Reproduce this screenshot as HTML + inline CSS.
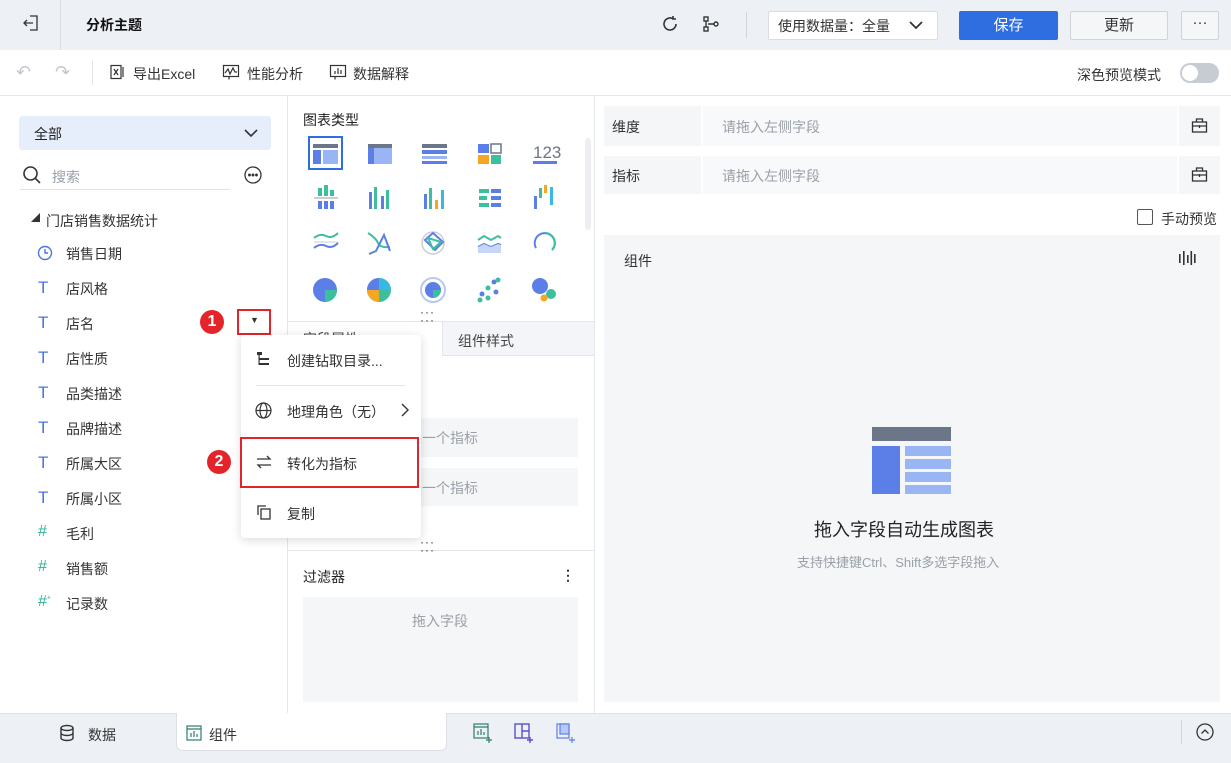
<!DOCTYPE html>
<html><head><meta charset="utf-8"><style>
*{box-sizing:border-box;margin:0;padding:0}
body{width:1231px;height:763px;overflow:hidden;font-family:"Liberation Sans","Noto Sans CJK SC",sans-serif;font-size:14px;color:#333;background:#fff;position:relative}
.a{position:absolute}
.t{position:absolute;white-space:nowrap}
.g{color:#9aa0a8}
</style></head><body>
<!-- top bar -->
<div class="a" style="left:0;top:0;width:1231px;height:50px;background:#edf0f5"></div>
<div class="a" style="left:60px;top:0;width:1px;height:50px;background:#d8dce3"></div>
<svg class="a" style="left:22px;top:14px" width="18" height="18" viewBox="0 0 18 18" fill="none" stroke="#333" stroke-width="1.3"><path d="M8 2h7v14H8M2 9h9M5 6L2 9l3 3"/></svg>
<div class="t" style="left:86px;top:15px;font-weight:bold;color:#111">分析主题</div>
<svg class="a" style="left:660px;top:14px" width="20" height="20" viewBox="0 0 20 20" fill="none" stroke="#333" stroke-width="1.6"><path d="M16 10a6 6 0 1 1-3-5.2M13 2v3h3"/></svg>
<svg class="a" style="left:701px;top:14px" width="20" height="20" viewBox="0 0 20 20" fill="none" stroke="#333" stroke-width="1.4"><rect x="3" y="3" width="4" height="4"/><rect x="3" y="13" width="4" height="4"/><circle cx="15" cy="10" r="2"/><path d="M5 7v6M7 10h6"/></svg>
<div class="a" style="left:746px;top:12px;width:1px;height:26px;background:#d0d4db"></div>
<div class="a" style="left:768px;top:11px;width:170px;height:29px;background:#fff;border:1px solid #d9dde3;border-radius:2px"></div>
<div class="t" style="left:778px;top:16px;color:#333">使用数据量：全量</div>
<svg class="a" style="left:908px;top:18px" width="16" height="14" viewBox="0 0 16 14" fill="none" stroke="#333" stroke-width="1.8"><path d="M2 4l6 6 6-6"/></svg>
<div class="a" style="left:959px;top:11px;width:99px;height:29px;background:#2f6ee0;border-radius:2px;color:#fff;text-align:center;line-height:29px;font-size:15px">保存</div>
<div class="a" style="left:1070px;top:11px;width:98px;height:29px;background:#f5f6f8;border:1px solid #cfd3d9;border-radius:2px;text-align:center;line-height:27px;font-size:15px">更新</div>
<div class="a" style="left:1181px;top:11px;width:38px;height:29px;background:#f5f6f8;border:1px solid #cfd3d9;border-radius:2px;text-align:center;line-height:22px;font-size:15px">···</div>
<!-- toolbar -->
<div class="a" style="left:0;top:95px;width:1231px;height:1px;background:#e4e7ec"></div>
<div class="t" style="left:16px;top:62px;color:#c3c7cd;font-size:18px">↶</div>
<div class="t" style="left:55px;top:62px;color:#c3c7cd;font-size:18px">↷</div>
<div class="a" style="left:92px;top:61px;width:1px;height:24px;background:#e0e3e8"></div>
<svg class="a" style="left:109px;top:64px" width="16" height="16" viewBox="0 0 16 16" fill="none" stroke="#333" stroke-width="1.2"><rect x="2" y="1.5" width="10" height="13"/><path d="M5 5l4 6M9 5l-4 6M14 3v10"/></svg>
<div class="t" style="left:133px;top:64px">导出Excel</div>
<svg class="a" style="left:222px;top:64px" width="18" height="16" viewBox="0 0 18 16" fill="none" stroke="#333" stroke-width="1.2"><rect x="1.5" y="1.5" width="15" height="11"/><path d="M3 9l3-4 2 5 3-6 2 4h2M7 12.5v3"/></svg>
<div class="t" style="left:247px;top:64px">性能分析</div>
<svg class="a" style="left:329px;top:64px" width="18" height="17" viewBox="0 0 18 17" fill="none" stroke="#333" stroke-width="1.2"><rect x="1.5" y="1.5" width="15" height="11"/><path d="M6 10V7M9 10V4M12 10V6M6 12.5v3"/></svg>
<div class="t" style="left:353px;top:64px">数据解释</div>
<div class="t" style="left:1077px;top:65px">深色预览模式</div>
<div class="a" style="left:1180px;top:63px;width:39px;height:20px;border-radius:10px;background:#c7cbd2"></div>
<div class="a" style="left:1182px;top:65px;width:16px;height:16px;border-radius:8px;background:#fff"></div>
<!-- panel dividers -->
<div class="a" style="left:287px;top:96px;width:1px;height:617px;background:#e4e7ec"></div>
<div class="a" style="left:594px;top:96px;width:1px;height:617px;background:#e4e7ec"></div>
<!-- left panel -->
<div class="a" style="left:19px;top:116px;width:252px;height:34px;background:#e6eefb;border-radius:3px"></div>
<div class="t" style="left:34px;top:124px;color:#222">全部</div>
<svg class="a" style="left:243px;top:126px" width="16" height="14" viewBox="0 0 16 14" fill="none" stroke="#333" stroke-width="1.6"><path d="M2 4l6 6 6-6"/></svg>
<svg class="a" style="left:22px;top:165px" width="20" height="20" viewBox="0 0 20 20" fill="none" stroke="#333" stroke-width="1.6"><circle cx="8.5" cy="8.5" r="6.5"/><path d="M13.5 13.5L18 18"/></svg>
<div class="t g" style="left:52px;top:167px">搜索</div>
<div class="a" style="left:20px;top:189px;width:210px;height:1px;background:#dfe2e7"></div>
<svg class="a" style="left:244px;top:166px" width="18" height="18" viewBox="0 0 18 18" fill="none" stroke="#333" stroke-width="1.3"><circle cx="9" cy="9" r="8"/><circle cx="5.5" cy="9" r=".8" fill="#333"/><circle cx="9" cy="9" r=".8" fill="#333"/><circle cx="12.5" cy="9" r=".8" fill="#333"/></svg>
<div class="t" style="left:31px;top:211px;font-size:9px">◢</div>
<div class="t" style="left:46px;top:211px">门店销售数据统计</div>
<svg class="a" style="left:37px;top:245px" width="16" height="16" viewBox="0 0 16 16" fill="none" stroke="#4a74e0" stroke-width="1.4"><circle cx="8" cy="8" r="6.5"/><path d="M8 4v4h3"/></svg>
<div class="t" style="left:66px;top:244px">销售日期</div>
<div class="t" style="left:38px;top:278px;color:#4a74e0;font-size:17px">T</div><div class="t" style="left:66px;top:279px">店风格</div>
<div class="t" style="left:38px;top:313px;color:#4a74e0;font-size:17px">T</div><div class="t" style="left:66px;top:314px">店名</div>
<div class="t" style="left:38px;top:348px;color:#4a74e0;font-size:17px">T</div><div class="t" style="left:66px;top:349px">店性质</div>
<div class="t" style="left:38px;top:383px;color:#4a74e0;font-size:17px">T</div><div class="t" style="left:66px;top:384px">品类描述</div>
<div class="t" style="left:38px;top:418px;color:#4a74e0;font-size:17px">T</div><div class="t" style="left:66px;top:419px">品牌描述</div>
<div class="t" style="left:38px;top:453px;color:#4a74e0;font-size:17px">T</div><div class="t" style="left:66px;top:454px">所属大区</div>
<div class="t" style="left:38px;top:488px;color:#4a74e0;font-size:17px">T</div><div class="t" style="left:66px;top:489px">所属小区</div>
<div class="t" style="left:38px;top:523px;color:#2eb39a;font-size:16px">#</div><div class="t" style="left:66px;top:524px">毛利</div>
<div class="t" style="left:38px;top:558px;color:#2eb39a;font-size:16px">#</div><div class="t" style="left:66px;top:559px">销售额</div>
<div class="t" style="left:38px;top:593px;color:#2eb39a;font-size:16px">#<sup style="font-size:7px">+</sup></div><div class="t" style="left:66px;top:594px">记录数</div>
<!-- badges -->
<div class="a" style="left:200px;top:310px;width:24px;height:24px;border-radius:12px;background:#e3242b;color:#fff;text-align:center;line-height:24px;font-size:16px;font-weight:bold">1</div>
<div class="a" style="left:207px;top:450px;width:24px;height:24px;border-radius:12px;background:#e3242b;color:#fff;text-align:center;line-height:24px;font-size:16px;font-weight:bold">2</div>
<div class="a" style="left:237px;top:309px;width:34px;height:26px;border:2px solid #e3242b"></div>
<div class="t" style="left:250px;top:315px;font-size:9px">▼</div>
<!-- middle -->
<div class="t" style="left:303px;top:110px;font-size:14px;color:#222">图表类型</div>
<div class="a" style="left:585px;top:138px;width:6px;height:92px;border-radius:3px;background:#eceef1"></div>
<div class="a" style="left:308px;top:136px;width:35px;height:34px;border:2px solid #2f6ee0"></div>
<svg class="a" style="left:288px;top:130px" width="300" height="180">
<g fill="#5b7fe6">
<rect x="25" y="14" width="25" height="4" fill="#6b7688"/><rect x="25" y="20" width="8" height="14"/><rect x="35" y="20" width="15" height="14" fill="#9ab5f3"/>
<rect x="80" y="14" width="6" height="20" fill="#5b7fe6"/><rect x="86" y="14" width="18" height="4" fill="#6b7688"/><rect x="86" y="18" width="18" height="16" fill="#9ab5f3"/><rect x="80" y="14" width="6" height="4" fill="#6b7688"/>
<rect x="134" y="14" width="25" height="4" fill="#6b7688"/><rect x="134" y="20" width="25" height="4"/><rect x="134" y="26" width="25" height="3" fill="#9ab5f3"/><rect x="134" y="31" width="25" height="3"/>
<rect x="190" y="14" width="11" height="9"/><rect x="203" y="14" width="10" height="9" fill="#fff" stroke="#6b7688" stroke-width="1.5"/><rect x="190" y="25" width="11" height="9" fill="#f5a623"/><rect x="203" y="25" width="10" height="9" fill="#3cbf9f"/>
<rect x="245" y="31" width="24" height="3"/>
<rect x="30" y="58" width="4" height="8" fill="#3cbf9f"/><rect x="36" y="55" width="4" height="11" fill="#3cbf9f"/><rect x="42" y="60" width="4" height="6" fill="#3cbf9f"/><rect x="26" y="67" width="24" height="2" fill="#c9ced6"/><rect x="30" y="71" width="4" height="8"/><rect x="36" y="71" width="4" height="8"/><rect x="42" y="71" width="4" height="8"/>
<rect x="81" y="62" width="3" height="17"/><rect x="86" y="57" width="3" height="22" fill="#3cbf9f"/><rect x="93" y="66" width="3" height="13"/><rect x="98" y="60" width="3" height="19" fill="#3cbf9f"/>
<rect x="136" y="64" width="3" height="15"/><rect x="141" y="58" width="3" height="21" fill="#3cbf9f"/><rect x="147" y="70" width="3" height="9" fill="#f5a623"/><rect x="153" y="60" width="3" height="19" fill="#39b8e6"/>
<rect x="191" y="59" width="10" height="4" fill="#3cbf9f"/><rect x="203" y="59" width="10" height="4"/><rect x="191" y="66" width="8" height="4" fill="#3cbf9f"/><rect x="203" y="66" width="10" height="4"/><rect x="191" y="73" width="10" height="4" fill="#3cbf9f"/><rect x="203" y="73" width="10" height="4"/>
<rect x="246" y="66" width="3" height="13"/><rect x="251" y="58" width="3" height="10" fill="#3cbf9f"/><rect x="256" y="55" width="3" height="8" fill="#f5a623"/><rect x="262" y="57" width="3" height="18" fill="#39b8e6"/>
<circle cx="37" cy="160" r="12"/><path d="M37 160h12a12 12 0 0 1-12 12z" fill="#3cbf9f"/>
<circle cx="91" cy="160" r="12" fill="#3cbf9f"/><path d="M91 160v-12a12 12 0 0 0-12 12z" fill="#5b7fe6"/><path d="M91 160h-12a12 12 0 0 0 12 12z" fill="#f5a623"/><path d="M91 160v-12a12 12 0 0 1 12 12z" fill="#39b8e6"/>
<circle cx="145" cy="160" r="12" fill="none" stroke="#b8c8f5" stroke-width="2"/><circle cx="145" cy="160" r="8"/><path d="M145 160h8a8 8 0 0 1-8 8z" fill="#3cbf9f"/>
<circle cx="194" cy="164" r="2.5"/><circle cx="200" cy="158" r="2.5" fill="#3cbf9f"/><circle cx="206" cy="152" r="2.5"/><circle cx="192" cy="170" r="2.5" fill="#3cbf9f"/><circle cx="200" cy="168" r="2.5" fill="#3cbf9f"/><circle cx="208" cy="162" r="2.5"/><circle cx="210" cy="150" r="2.5" fill="#3cbf9f"/>
<circle cx="252" cy="156" r="8"/><circle cx="263" cy="164" r="5" fill="#3cbf9f"/><circle cx="256" cy="168" r="3.5" fill="#f5a623"/>
</g>
<text x="245" y="28" font-size="17" fill="#6b7688" font-family="Liberation Sans">123</text>
<g fill="none" stroke-width="2">
<path d="M26 108q6-5 12-2t12-3" stroke="#3cbf9f"/><path d="M26 118q6-5 12-2t12-3" stroke="#5b7fe6"/><path d="M26 112h24" stroke="#c9ced6" stroke-width="1"/>
<path d="M80 103q8 5 10 10t12 4" stroke="#3cbf9f"/><path d="M81 124l7-3 8-16 6 16" stroke="#5b7fe6"/>
<circle cx="145" cy="113" r="11" stroke="#c9ced6" stroke-width="1.5"/><path d="M137 110l8-7 10 9-8 8z" stroke="#5b7fe6"/><path d="M140 108l13 4-8 7z" stroke="#3cbf9f"/>
<path d="M190 110l6-4 7 4 7-4 3 2" stroke="#3cbf9f"/><path d="M190 117l6-3 7 3 7-3 3 1" stroke="#5b7fe6"/>
<path d="M248 118a10 10 0 1 1 16 2" stroke="#5b7fe6"/><path d="M258 103a10 10 0 0 1 6 17" stroke="#3cbf9f"/>
</g>
<path d="M190 117l6-3 7 3 7-3 3 1v8h-23z" fill="#c7d5f7"/>
</svg>
<div class="a" style="left:288px;top:321px;width:306px;height:1px;background:#e4e7ec"></div>
<div class="t" style="left:420px;top:308px;font-size:12px;letter-spacing:1px;line-height:8px">···<br>···</div>
<div class="a" style="left:442px;top:322px;width:152px;height:34px;background:#f3f5f8;border-left:1px solid #e4e7ec;border-bottom:1px solid #e4e7ec"></div>
<div class="t" style="left:458px;top:331px;color:#444">组件样式</div>
<div class="t" style="left:303px;top:329px;color:#444">字段属性</div>
<div class="a" style="left:403px;top:418px;width:175px;height:39px;background:#f5f6f8"></div>
<div class="t g" style="left:408px;top:428px">入一个指标</div>
<div class="a" style="left:403px;top:468px;width:175px;height:38px;background:#f5f6f8"></div>
<div class="t g" style="left:408px;top:478px">入一个指标</div>
<div class="a" style="left:288px;top:550px;width:306px;height:1px;background:#e4e7ec"></div>
<div class="t" style="left:420px;top:538px;font-size:12px;letter-spacing:1px;line-height:8px">···<br>···</div>
<div class="t" style="left:303px;top:567px;color:#222">过滤器</div>
<div class="t" style="left:561px;top:567px;font-weight:bold">⋮</div>
<div class="a" style="left:303px;top:597px;width:275px;height:105px;background:#f5f6f8"></div>
<div class="t g" style="left:412px;top:611px">拖入字段</div>
<!-- menu -->
<div class="a" style="left:241px;top:335px;width:180px;height:203px;background:#fff;border-radius:4px;box-shadow:0 2px 10px rgba(0,0,0,.15)"></div>
<svg class="a" style="left:256px;top:351px" width="16" height="16" viewBox="0 0 16 16" fill="#333"><rect x="1" y="1" width="5" height="3"/><rect x="2.5" y="4" width="1.2" height="10"/><rect x="3" y="7" width="10" height="2"/><rect x="3" y="12" width="10" height="2"/></svg>
<div class="t" style="left:287px;top:351px">创建钻取目录...</div>
<div class="a" style="left:256px;top:385px;width:150px;height:1px;background:#e4e7ec"></div>
<svg class="a" style="left:255px;top:402px" width="17" height="17" viewBox="0 0 17 17" fill="none" stroke="#333" stroke-width="1.2"><circle cx="8.5" cy="8.5" r="7.5"/><ellipse cx="8.5" cy="8.5" rx="3.5" ry="7.5"/><path d="M1 8.5h15"/></svg>
<div class="t" style="left:287px;top:402px">地理角色（无）</div>
<svg class="a" style="left:400px;top:402px" width="10" height="16" viewBox="0 0 10 16" fill="none" stroke="#333" stroke-width="1.4"><path d="M2 2l6 6-6 6"/></svg>
<div class="a" style="left:240px;top:437px;width:179px;height:51px;border:2px solid #e3242b"></div>
<svg class="a" style="left:256px;top:454px" width="16" height="16" viewBox="0 0 16 16" fill="none" stroke="#333" stroke-width="1.3"><path d="M1 5h13l-3-3M15 11H2l3 3"/></svg>
<div class="t" style="left:287px;top:454px">转化为指标</div>
<svg class="a" style="left:256px;top:504px" width="16" height="16" viewBox="0 0 16 16" fill="none" stroke="#333" stroke-width="1.3"><rect x="5" y="5" width="9" height="10"/><path d="M2 11V2h8"/></svg>
<div class="t" style="left:287px;top:504px">复制</div>
<!-- right -->
<div class="a" style="left:604px;top:106px;width:616px;height:40px;background:#f5f6f8"></div>
<div class="a" style="left:701px;top:106px;width:478px;height:40px;background:#f8f9fa;border-left:2px solid #fff;border-right:2px solid #fff"></div>
<div class="t" style="left:612px;top:117px">维度</div>
<div class="t g" style="left:722px;top:117px">请拖入左侧字段</div>
<div class="a" style="left:604px;top:156px;width:616px;height:38px;background:#f5f6f8"></div>
<div class="a" style="left:701px;top:156px;width:478px;height:38px;background:#f8f9fa;border-left:2px solid #fff;border-right:2px solid #fff"></div>
<div class="t" style="left:612px;top:166px">指标</div>
<div class="t g" style="left:722px;top:166px">请拖入左侧字段</div>
<svg class="a" style="left:1191px;top:117px" width="17" height="17" viewBox="0 0 17 17" fill="none" stroke="#333" stroke-width="1.3"><rect x="1.5" y="5" width="14" height="10"/><path d="M5.5 5V2h6v3M1.5 9h14M8.5 8v3"/></svg>
<svg class="a" style="left:1191px;top:166px" width="17" height="17" viewBox="0 0 17 17" fill="none" stroke="#333" stroke-width="1.3"><rect x="1.5" y="5" width="14" height="10"/><path d="M5.5 5V2h6v3M1.5 9h14M8.5 8v3"/></svg>
<div class="a" style="left:1137px;top:209px;width:16px;height:16px;border:1px solid #555;border-radius:2px"></div>
<div class="t" style="left:1161px;top:209px">手动预览</div>
<div class="a" style="left:604px;top:235px;width:616px;height:467px;background:#f5f6f8"></div>
<div class="t" style="left:624px;top:251px">组件</div>
<svg class="a" style="left:1178px;top:250px" width="18" height="16" viewBox="0 0 18 16" fill="#333"><rect x="1" y="4" width="1.6" height="9"/><rect x="5" y="1" width="1.6" height="14"/><rect x="9" y="5" width="1.6" height="8"/><rect x="12.5" y="1" width="1.6" height="14"/><rect x="16" y="4" width="1.6" height="9"/></svg>
<div class="a" style="left:872px;top:427px;width:79px;height:14px;background:#6b7688"></div>
<div class="a" style="left:872px;top:446px;width:28px;height:48px;background:#5b7fe6"></div>
<div class="a" style="left:905px;top:446px;width:46px;height:10px;background:#9ab5f3"></div>
<div class="a" style="left:905px;top:459px;width:46px;height:10px;background:#9ab5f3"></div>
<div class="a" style="left:905px;top:472px;width:46px;height:10px;background:#9ab5f3"></div>
<div class="a" style="left:905px;top:485px;width:46px;height:9px;background:#9ab5f3"></div>
<div class="t" style="left:814px;top:516px;font-size:18px;color:#222">拖入字段自动生成图表</div>
<div class="t g" style="left:797px;top:552px;font-size:13px">支持快捷键Ctrl、Shift多选字段拖入</div>
<!-- bottom -->
<div class="a" style="left:0;top:713px;width:1231px;height:50px;background:#edf0f5;border-top:1px solid #dde0e6"></div>
<div class="a" style="left:176px;top:713px;width:271px;height:38px;background:#fff;border-radius:0 0 6px 6px;border:1px solid #dde0e6;border-top:none"></div>
<svg class="a" style="left:59px;top:724px" width="16" height="18" viewBox="0 0 16 18" fill="none" stroke="#333" stroke-width="1.4"><ellipse cx="8" cy="4" rx="6" ry="2.5"/><path d="M2 4v10c0 1.4 2.7 2.5 6 2.5s6-1.1 6-2.5V4M2 9c0 1.4 2.7 2.5 6 2.5s6-1.1 6-2.5"/></svg>
<div class="t" style="left:88px;top:725px">数据</div>
<svg class="a" style="left:186px;top:725px" width="16" height="16" viewBox="0 0 16 16" fill="none" stroke="#2e7d6e" stroke-width="1.2"><rect x="1" y="1" width="14" height="14"/><path d="M1 4h14M5 12V8M8 12V6M11 12V9"/></svg>
<div class="t" style="left:209px;top:725px">组件</div>
<svg class="a" style="left:473px;top:723px" width="20" height="20" viewBox="0 0 20 20" fill="none" stroke="#2e7d6e" stroke-width="1.2"><rect x="1" y="1" width="14" height="14"/><path d="M1 4h14M5 12V8M8 12V6M11 12V9M16 14v6M13 17h6"/></svg>
<svg class="a" style="left:514px;top:723px" width="20" height="20" viewBox="0 0 20 20" fill="none" stroke="#5a4fc9" stroke-width="1.4"><rect x="1" y="1" width="14" height="14"/><path d="M8 1v14M8 8h7M16 14v6M13 17h6"/></svg>
<svg class="a" style="left:556px;top:723px" width="20" height="20" viewBox="0 0 20 20" fill="none" stroke="#5b7fe6" stroke-width="1.2"><rect x="1" y="1" width="12" height="14"/><rect x="4" y="1" width="9" height="10" fill="#b8c8f5"/><path d="M16 14v6M13 17h6"/></svg>
<div class="a" style="left:1181px;top:720px;width:1px;height:24px;background:#d0d4db"></div>
<svg class="a" style="left:1196px;top:723px" width="18" height="18" viewBox="0 0 18 18" fill="none" stroke="#333" stroke-width="1.3"><circle cx="9" cy="9" r="8"/><path d="M5.5 10.5L9 7l3.5 3.5"/></svg>
</body></html>
